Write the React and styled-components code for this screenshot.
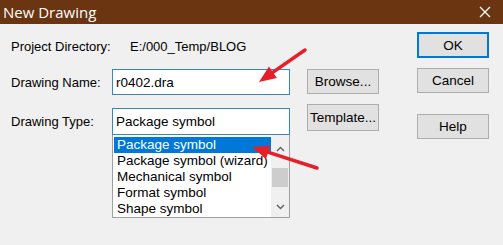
import React from "react";
import styled, { createGlobalStyle } from "styled-components";

const Global = createGlobalStyle`
  html, body { margin: 0; padding: 0; background: #f0f0f0; }
  body { font-family: "Liberation Sans", Arial, sans-serif; font-size: 13px; color: #000; }
`;

const Dialog = styled.div`
  position: relative;
  width: 503px;
  height: 245px;
  background: #f0f0f0;
  overflow: hidden;
`;

const TitleBar = styled.div`
  height: 24px;
  background: #6a3510;
  display: flex;
  align-items: center;
  justify-content: space-between;
  padding: 0 12px 0 3px;
  color: #fff;
`;

const Title = styled.span`
  font-family: "Open Sans", "Noto Sans", sans-serif;
  font-size: 15px;
  line-height: 24px;
`;

const Body = styled.div`
  display: flex;
  padding-left: 11px;
`;

const Form = styled.div`
  display: grid;
  grid-template-columns: 101px 178px;
  align-items: start;
  padding-top: 14px;
`;

const Label = styled.div`
  height: ${(p) => p.$h || 26}px;
  display: flex;
  align-items: center;
  margin-top: ${(p) => p.$mt || 0}px;
`;

const Value = styled.div`
  height: 16px;
  display: flex;
  align-items: center;
  padding-left: 18px;
`;

const Input = styled.div`
  height: ${(p) => p.$h || 26}px;
  box-sizing: border-box;
  border: 1px solid #3a84c4;
  background: #fff;
  display: flex;
  align-items: center;
  padding-left: 3px;
  font-size: 13.5px;
  margin-top: ${(p) => p.$mt || 0}px;
`;

const TypeField = styled.div`
  margin-top: ${(p) => p.$mt || 0}px;
  display: flex;
  flex-direction: column;
`;

const ListBox = styled.div`
  height: 83px;
  box-sizing: border-box;
  border: 1px solid #a0a0a0;
  border-top: none;
  background: #fff;
  display: flex;
  overflow: hidden;
`;

const Items = styled.div`
  flex: 1;
  padding: 2px 0 0 1px;
`;

const Item = styled.div`
  height: 16px;
  line-height: 16px;
  padding-left: 3px;
  font-size: 13.5px;
  white-space: nowrap;
  background: ${(p) => (p.$sel ? "#0078d7" : "transparent")};
  color: ${(p) => (p.$sel ? "#fff" : "#000")};
`;

const ScrollBar = styled.div`
  width: 18px;
  display: flex;
  flex-direction: column;
  align-items: center;
  background: #f0f0f0;
`;

const ArrowBox = styled.div`
  height: 18px;
  width: 18px;
  display: flex;
  align-items: center;
  justify-content: center;
  margin-top: ${(p) => p.$mt || 0}px;
`;

const Thumb = styled.div`
  width: 16px;
  height: 19px;
  background: #cdcdcd;
  margin-top: 10px;
`;

const Column = styled.div`
  display: flex;
  flex-direction: column;
  margin-left: ${(p) => p.$ml}px;
  padding-top: ${(p) => p.$pt}px;
`;

const Button = styled.div`
  width: 72px;
  height: ${(p) => p.$h || 25}px;
  box-sizing: border-box;
  border: ${(p) => (p.$default ? "2px solid #0078d7" : "1px solid #adadad")};
  background: #e1e1e1;
  display: flex;
  align-items: center;
  justify-content: center;
  font-size: 13.5px;
  margin-top: ${(p) => p.$mt || 0}px;
`;

const Overlay = styled.svg`
  position: absolute;
  left: 0;
  top: 0;
  pointer-events: none;
`;

function Arrow({ x1, y1, x2, y2 }) {
  const dx = x2 - x1;
  const dy = y2 - y1;
  const len = Math.hypot(dx, dy);
  const ux = dx / len;
  const uy = dy / len;
  const hl = 17;
  const hw = 7;
  const bx = x2 - ux * hl;
  const by = y2 - uy * hl;
  const px = -uy;
  const py = ux;
  return (
    <g>
      <line x1={x1} y1={y1} x2={bx + ux * 2} y2={by + uy * 2} stroke="#e5202a" strokeWidth="3.5" strokeLinecap="round" />
      <polygon
        points={`${x2},${y2} ${bx + px * hw},${by + py * hw} ${bx - px * hw},${by - py * hw}`}
        fill="#e5202a"
      />
    </g>
  );
}

export default function App() {
  return (
    <>
      <Global />
      <Dialog>
        <TitleBar>
          <Title>New Drawing</Title>
          <svg width="12" height="12" viewBox="0 0 12 12">
            <path d="M1 1 L11 11 M11 1 L1 11" stroke="#fff" strokeWidth="1.3" />
          </svg>
        </TitleBar>
        <Body>
          <Form>
            <Label $h={16}>Project Directory:</Label>
            <Value>E:/000_Temp/BLOG</Value>
            <Label $mt={15}>Drawing Name:</Label>
            <Input $mt={15}>r0402.dra</Input>
            <Label $mt={13}>Drawing Type:</Label>
            <TypeField $mt={13}>
              <Input $h={27}>Package symbol</Input>
              <ListBox>
                <Items>
                  <Item $sel>Package symbol</Item>
                  <Item>Package symbol (wizard)</Item>
                  <Item>Mechanical symbol</Item>
                  <Item>Format symbol</Item>
                  <Item>Shape symbol</Item>
                </Items>
                <ScrollBar>
                  <ArrowBox $mt={5}>
                    <svg width="9" height="6" viewBox="0 0 9 6">
                      <path d="M1 5 L4.5 1.5 L8 5" stroke="#606060" strokeWidth="1.4" fill="none" />
                    </svg>
                  </ArrowBox>
                  <Thumb />
                  <ArrowBox $mt={11}>
                    <svg width="9" height="6" viewBox="0 0 9 6">
                      <path d="M1 1 L4.5 4.5 L8 1" stroke="#606060" strokeWidth="1.4" fill="none" />
                    </svg>
                  </ArrowBox>
                </ScrollBar>
              </ListBox>
            </TypeField>
          </Form>
          <Column $ml={17} $pt={45}>
            <Button $h={25}>Browse...</Button>
            <Button $h={27} $mt={10}>Template...</Button>
          </Column>
          <Column $ml={38} $pt={8}>
            <Button $default $h={26}>OK</Button>
            <Button $h={25} $mt={10}>Cancel</Button>
            <Button $h={25} $mt={21}>Help</Button>
          </Column>
        </Body>
        <Overlay width="503" height="245">
          <Arrow x1={305} y1={50} x2={259} y2={82} />
          <Arrow x1={317} y1={168} x2={252} y2={147} />
        </Overlay>
      </Dialog>
    </>
  );
}
